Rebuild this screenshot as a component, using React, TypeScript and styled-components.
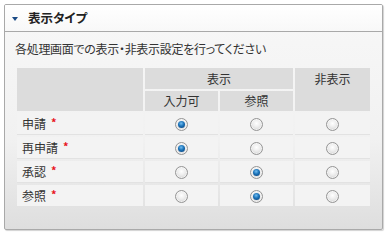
import React from "react";
import styled, { createGlobalStyle } from "styled-components";

const GlobalStyle = createGlobalStyle`
  html, body {
    margin: 0;
    padding: 0;
    background: #ffffff;
  }
  body {
    padding: 4px;
    font-family: "Noto Sans CJK JP", "Noto Sans", sans-serif;
    font-feature-settings: "palt";
    font-size: 12px;
    color: #333333;
  }
`;

const Panel = styled.div`
  width: 377px;
  height: 224px;
  border: 1px solid #a9a9a9;
  border-radius: 2px;
  box-shadow: 1px 1px 1px rgba(0, 0, 0, 0.18);
  display: flex;
  flex-direction: column;
  background: linear-gradient(#f8f8f8 0%, #f1f1f1 60%, #dedede 100%);
  overflow: hidden;
`;

const Header = styled.div`
  height: 26px;
  border-bottom: 1px solid #a9a9a9;
  background: linear-gradient(#ffffff, #f8f8f8);
  display: flex;
  align-items: center;
  padding-left: 7px;
  gap: 10px;
`;

const Toggle = styled.span`
  width: 0;
  height: 0;
  border-left: 3.5px solid transparent;
  border-right: 3.5px solid transparent;
  border-top: 4px solid #1b4b86;
  margin-top: 2px;
`;

const Title = styled.h2`
  margin: 0;
  font-size: 12.5px;
  font-weight: bold;
  color: #222222;
  line-height: 1;
`;

const Body = styled.div`
  padding: 9px 10px 0 10px;
  display: flex;
  flex-direction: column;
  gap: 9px;
`;

const Description = styled.p`
  margin: 0;
  font-size: 12px;
  line-height: 16px;
  letter-spacing: -0.3px;
  color: #333333;
`;

const Table = styled.table`
  width: 357px;
  border-collapse: separate;
  border-spacing: 2px;
  table-layout: fixed;
  font-size: 12px;
  line-height: 16px;
`;

const HeadCell = styled.th<{ $top?: boolean }>`
  background: #dcdcdc;
  font-size: 12px;
  font-weight: normal;
  color: #333333;
  text-align: center;
  padding: ${(p) => (p.$top ? "3px 0 0 0" : "0")};
  vertical-align: ${(p) => (p.$top ? "top" : "middle")};
  height: 20px;
  line-height: 16px;
`;

const LabelCell = styled.td`
  background: #f3f3f3;
  border-bottom: 1px solid #e2e2e2;
  height: 21px;
  padding: 0 0 0 5px;
  font-size: 12px;
  line-height: 16px;
  color: #333333;
`;

const RadioCell = styled.td`
  background: #f3f3f3;
  border-bottom: 1px solid #e2e2e2;
  height: 21px;
  padding: 0;
  font-size: 12px;
  line-height: 14px;
  text-align: center;
  vertical-align: middle;
`;

const Required = styled.span`
  color: #e8141e;
  font-size: 11px;
  font-weight: bold;
  margin-left: 5px;
  position: relative;
  top: -2px;
`;

const Radio = styled.span<{ $checked?: boolean }>`
  display: inline-block;
  width: 11px;
  height: 11px;
  border-radius: 50%;
  border: 1px solid #959595;
  background: radial-gradient(circle at 50% 40%, #ffffff 0%, #ececec 45%, #c4c4c4 100%);
  position: relative;
  vertical-align: middle;
  box-shadow: inset 0 0 0 1px rgba(255, 255, 255, 0.6);

  &::after {
    content: "";
    display: ${(p) => (p.$checked ? "block" : "none")};
    position: absolute;
    left: 2px;
    top: 2px;
    width: 7px;
    height: 7px;
    border-radius: 50%;
    background: radial-gradient(circle at 45% 35%, #72bdf0 0%, #1a72b8 45%, #0a3a70 100%);
  }
`;

type Choice = 0 | 1 | 2;

const rows: { label: string; choice: Choice }[] = [
  { label: "申請", choice: 0 },
  { label: "再申請", choice: 0 },
  { label: "承認", choice: 1 },
  { label: "参照", choice: 1 },
];

export default function App() {
  return (
    <>
      <GlobalStyle />
      <Panel>
        <Header>
          <Toggle />
          <Title>表示タイプ</Title>
        </Header>
        <Body>
          <Description>各処理画面での表示・非表示設定を行ってください</Description>
          <Table>
            <colgroup>
              <col style={{ width: 126 }} />
              <col style={{ width: 73 }} />
              <col style={{ width: 73 }} />
              <col />
            </colgroup>
            <thead>
              <tr>
                <HeadCell rowSpan={2} />
                <HeadCell colSpan={2} style={{ height: 21 }}>
                  表示
                </HeadCell>
                <HeadCell rowSpan={2} $top>
                  非表示
                </HeadCell>
              </tr>
              <tr>
                <HeadCell>入力可</HeadCell>
                <HeadCell>参照</HeadCell>
              </tr>
            </thead>
            <tbody>
              {rows.map((row) => (
                <tr key={row.label}>
                  <LabelCell>
                    {row.label}
                    <Required>*</Required>
                  </LabelCell>
                  {[0, 1, 2].map((i) => (
                    <RadioCell key={i}>
                      <Radio $checked={row.choice === i} />
                    </RadioCell>
                  ))}
                </tr>
              ))}
            </tbody>
          </Table>
        </Body>
      </Panel>
    </>
  );
}
